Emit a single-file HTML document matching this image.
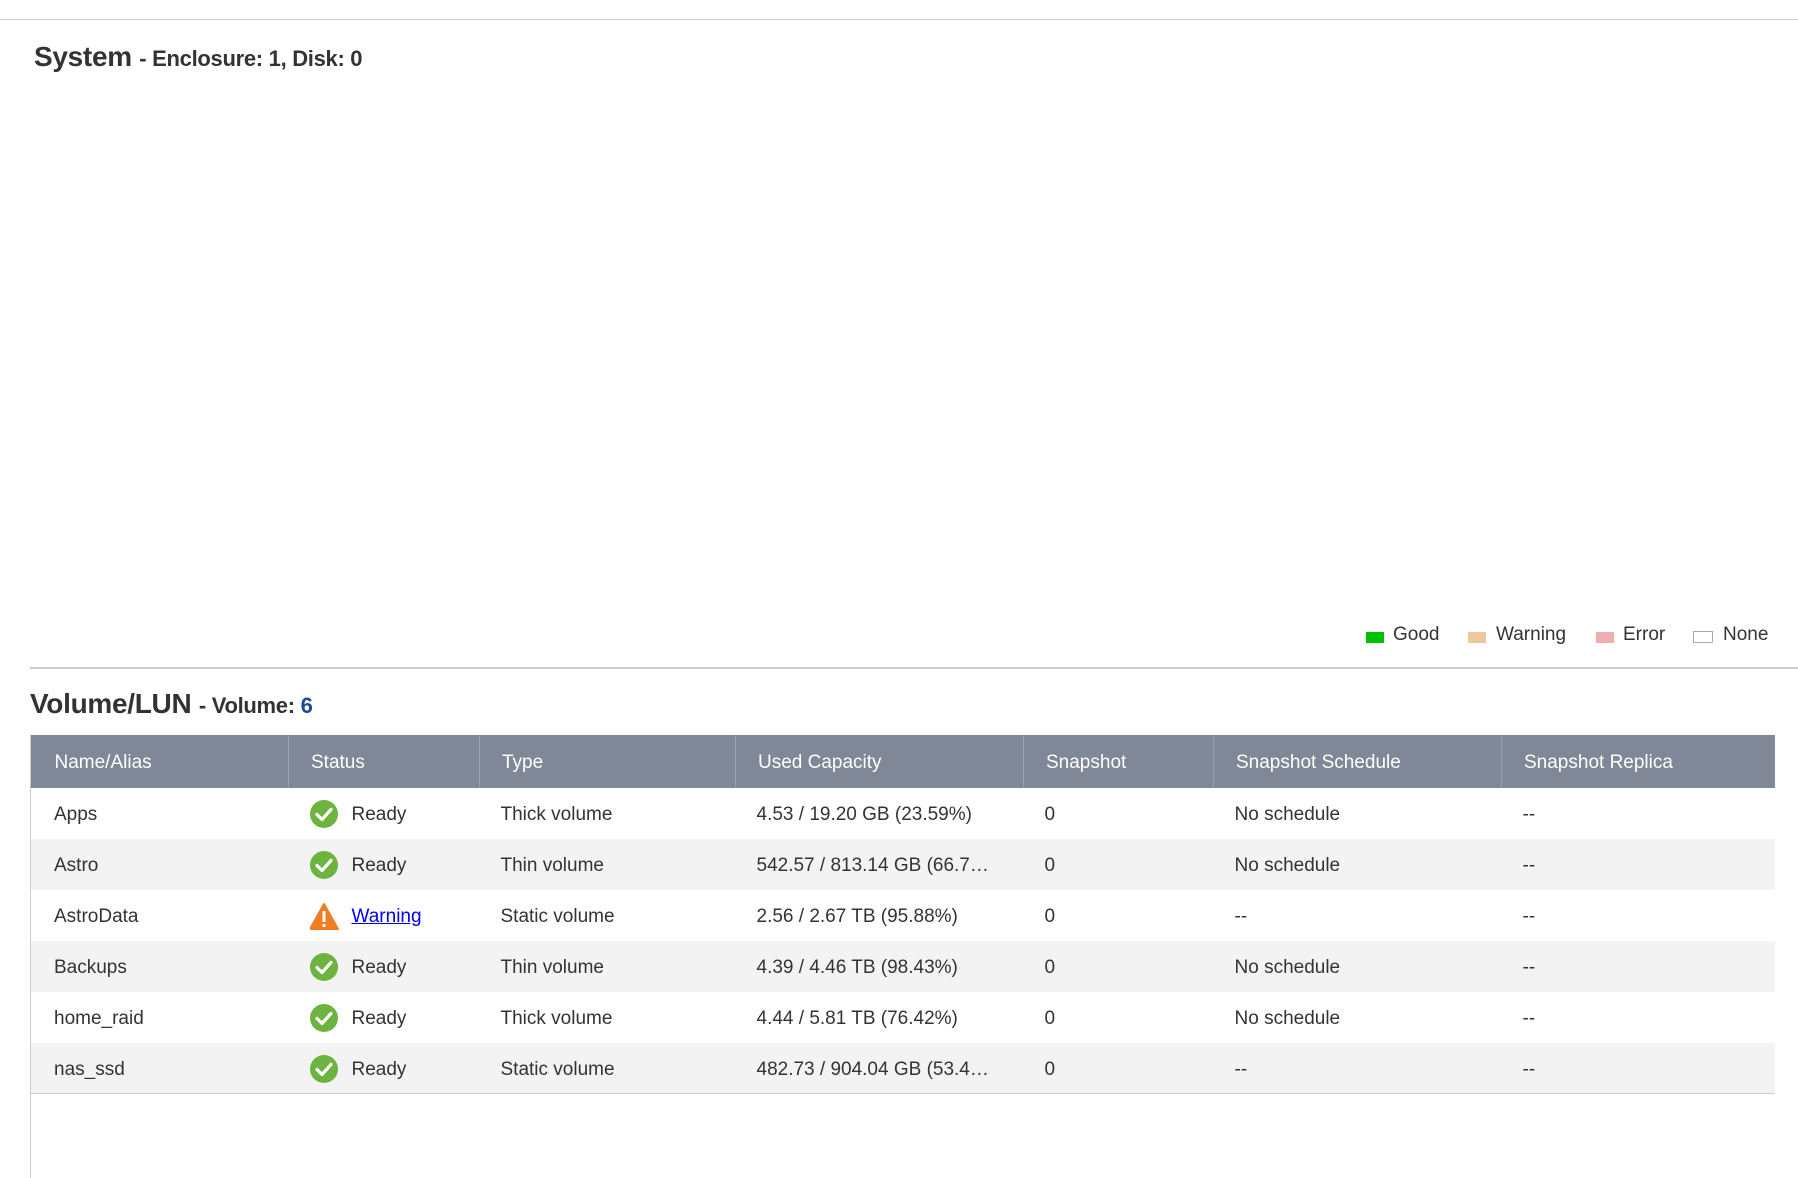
<!DOCTYPE html>
<html><head><style>
body{margin:0;width:1798px;height:1178px;background:#fff;font-family:"Liberation Sans",sans-serif;color:#333;position:relative;overflow:hidden}
.a{position:absolute}
table{border-collapse:collapse;table-layout:fixed;position:absolute;left:30px;top:735px;width:1744px;font-size:19px}
th{background:#808797;color:#fff;font-weight:normal;text-align:left;height:51px;padding:2px 0 0 22px;border-left:1px solid #9aa0ae}
th:first-child{border-left:none;padding-left:24px}
td{height:49px;padding:2px 0 0 21px;white-space:nowrap;overflow:hidden;color:#333;background:#fff}
td:first-child{padding-left:23px;border-left:1px solid #ccc}
tr:nth-child(odd) td{background:#f3f3f3}
.st{display:flex;align-items:center}
.st svg{margin-right:13px;margin-left:0}
a{color:#0000ee}
.sq{position:absolute;top:632px;width:18px;height:11px}
.lg{position:absolute;top:624px;font-size:19px}
</style></head><body>
<div class="a" style="left:0;top:19px;width:1798px;height:1px;background:#ccc"></div>
<div class="a" style="left:34px;top:41px;font-size:28px;color:#333;font-weight:bold;letter-spacing:-0.3px">System <span style="font-size:22px">- Enclosure: 1, Disk: 0</span></div>
<div class="sq" style="left:1366px;background:#00c000"></div><div class="lg" style="left:1393px">Good</div>
<div class="sq" style="left:1468px;background:#ecc89d"></div><div class="lg" style="left:1496px">Warning</div>
<div class="sq" style="left:1596px;background:#efafaf"></div><div class="lg" style="left:1623px">Error</div>
<div class="sq" style="left:1693px;width:18px;height:10px;border:1px solid #aaa;top:631px"></div><div class="lg" style="left:1723px">None</div>
<div class="a" style="left:30px;top:667px;width:1768px;height:2px;background:#ccc"></div>
<div class="a" style="left:30px;top:688px;font-size:28px;color:#333;font-weight:bold;letter-spacing:-0.3px">Volume/LUN <span style="font-size:22px">- Volume: <span style="color:#1a4a9a">6</span></span></div>
<div class="a" style="left:30px;top:735px;width:1px;height:443px;background:#ccc"></div>
<svg width="0" height="0" style="position:absolute"><defs>
<g id="ok"><circle cx="14" cy="14" r="14" fill="#6db33f"/><path d="M7 14.5l5 5 9-10" stroke="#fff" stroke-width="3.2" fill="none" stroke-linecap="round" stroke-linejoin="round"/></g>
<g id="wn"><path d="M14 2 L28 27 L0 27 Z" fill="#ef7d22" stroke="#ef7d22" stroke-width="2" stroke-linejoin="round"/><rect x="12.5" y="9" width="3" height="11" fill="#fff"/><rect x="12.5" y="22" width="3" height="3" fill="#fff"/></g>
</defs></svg>
<table>
<colgroup><col style="width:258px"><col style="width:191px"><col style="width:256px"><col style="width:288px"><col style="width:190px"><col style="width:288px"><col style="width:273px"></colgroup>
<tr><th>Name/Alias</th><th>Status</th><th>Type</th><th>Used Capacity</th><th>Snapshot</th><th>Snapshot Schedule</th><th>Snapshot Replica</th></tr>
<tr><td>Apps</td><td><div class="st"><svg width="29" height="29"><use href="#ok"/></svg>Ready</div></td><td>Thick volume</td><td>4.53 / 19.20 GB (23.59%)</td><td>0</td><td>No schedule</td><td>--</td></tr>
<tr><td>Astro</td><td><div class="st"><svg width="29" height="29"><use href="#ok"/></svg>Ready</div></td><td>Thin volume</td><td>542.57 / 813.14 GB (66.7…</td><td>0</td><td>No schedule</td><td>--</td></tr>
<tr><td>AstroData</td><td><div class="st"><svg width="29" height="29"><use href="#wn"/></svg><a href="#">Warning</a></div></td><td>Static volume</td><td>2.56 / 2.67 TB (95.88%)</td><td>0</td><td>--</td><td>--</td></tr>
<tr><td>Backups</td><td><div class="st"><svg width="29" height="29"><use href="#ok"/></svg>Ready</div></td><td>Thin volume</td><td>4.39 / 4.46 TB (98.43%)</td><td>0</td><td>No schedule</td><td>--</td></tr>
<tr><td>home_raid</td><td><div class="st"><svg width="29" height="29"><use href="#ok"/></svg>Ready</div></td><td>Thick volume</td><td>4.44 / 5.81 TB (76.42%)</td><td>0</td><td>No schedule</td><td>--</td></tr>
<tr><td>nas_ssd</td><td><div class="st"><svg width="29" height="29"><use href="#ok"/></svg>Ready</div></td><td>Static volume</td><td>482.73 / 904.04 GB (53.4…</td><td>0</td><td>--</td><td>--</td></tr>
</table>
<div class="a" style="left:30px;top:1093px;width:1744px;height:1px;background:#ccc"></div>
</body></html>
